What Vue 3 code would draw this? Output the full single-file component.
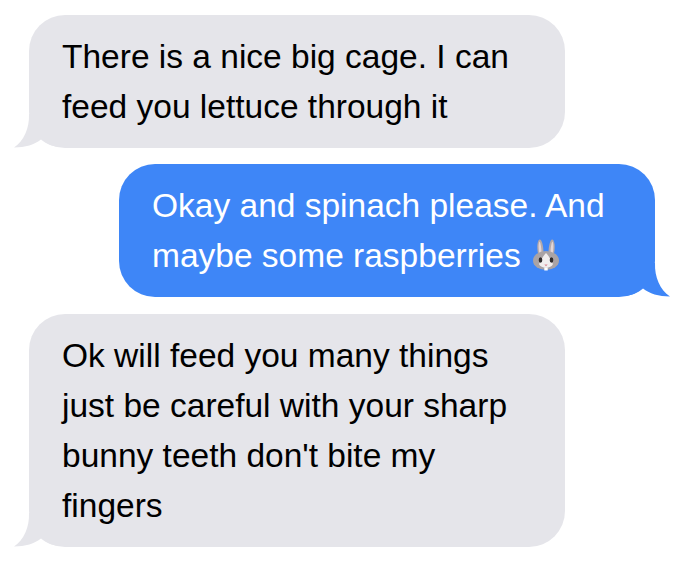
<template>
  <div class="thread">
    <div v-for="(msg, i) in messages" :key="i" class="bubble" :class="msg.mine ? 'mine' : 'theirs'">
      <template v-for="(line, j) in msg.lines" :key="j">
        <div class="line">{{ line }}<svg v-if="msg.bunny && j === msg.lines.length - 1" class="bunny" viewBox="0 0 28 34" width="28" height="34">
          <path d="M7 19C4.500 12 4.800 3 7.500 1.500C10 1 11.500 9 11.500 15Z" fill="#b3a9ab" />
          <path d="M21 19C23.500 12 23.200 3 20.500 1.500C18 1 16.500 9 16.500 15Z" fill="#b3a9ab" />
          <path d="M7.500 16C6.300 11 6.400 5 7.500 3.500C8.800 5 9.500 11 9.500 15Z" fill="#e3d5d6" />
          <path d="M20.500 16C21.700 11 21.600 5 20.500 3.500C19.200 5 18.500 11 18.500 15Z" fill="#e3d5d6" />
          <ellipse cx="14" cy="22.500" rx="13" ry="9.500" fill="#a9a3a5" />
          <path d="M14 15C11 18 10 21 7 26C9 31 19 31 21 26C18 21 17 18 14 15Z" fill="#f1eeee" />
          <ellipse cx="8.500" cy="22" rx="1.800" ry="2.800" fill="#2f2b2c" />
          <ellipse cx="19.500" cy="22" rx="1.800" ry="2.800" fill="#2f2b2c" />
          <path d="M12.300 26.500H15.700L14 28.300Z" fill="#d8838f" />
          <path d="M12.300 29.500H15.700V32.500H12.300Z" fill="#ffffff" />
        </svg></div>
      </template>
      <svg class="tail" viewBox="0 0 48 34" width="48" height="34">
        <path d="M15 0C15.500 14 10 27 0 33.500C11 33.500 21 30.500 27 25.500C32 30 39 33 48 33V0Z" />
      </svg>
    </div>
  </div>
</template>

<script setup>
const messages = [
  { lines: ['There is a nice big cage. I can', 'feed you lettuce through it'] },
  { mine: true, bunny: true, lines: ['Okay and spinach please. And', 'maybe some raspberries '] },
  {
    lines: [
      'Ok will feed you many things',
      'just be careful with your sharp',
      "bunny teeth don't bite my",
      'fingers',
    ],
  },
]
</script>

<style>
body { background: #fff; }
</style>

<style scoped>
.thread {
  width: 700px;
  height: 562px;
  box-sizing: border-box;
  padding: 15px 45px 0 29px;
  display: flex;
  flex-direction: column;
  gap: 16px;
  font-family: "Liberation Sans", Arial, sans-serif;
  font-size: 33.500px;
  line-height: 50px;
}
.bubble {
  position: relative;
  width: 536px;
  height: auto;
  box-sizing: border-box;
  padding: 16.500px 33px;
  border-radius: 36px;
}
.line { white-space: pre; height: 50px; }
.theirs {
  background: #e5e5ea;
  color: #000;
}
.mine {
  background: #3e86f7;
  color: #fff;
  margin-left: 90px;
  margin-bottom: 1px;
}
.tail {
  position: absolute;
  bottom: 0;
  display: block;
}
.theirs .tail {
  left: -15px;
  fill: #e5e5ea;
}
.mine .tail {
  right: -15px;
  fill: #3e86f7;
  transform: scaleX(-1);
}
.bunny {
  display: inline-block;
  vertical-align: -5px;
  margin-left: 2px;
}
</style>
